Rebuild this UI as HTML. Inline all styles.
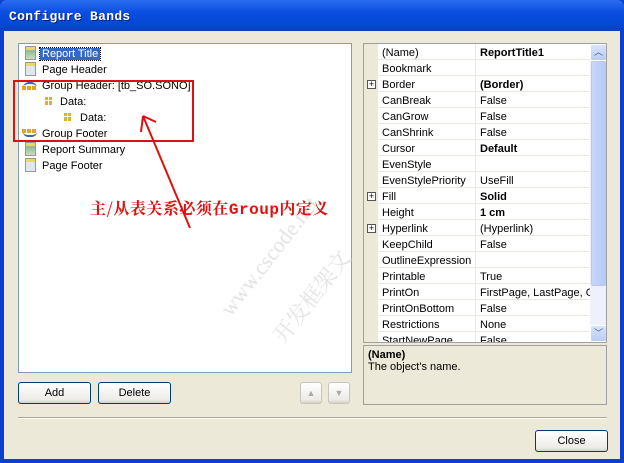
<!DOCTYPE html>
<html><head><meta charset="utf-8"><style>
*{margin:0;padding:0;box-sizing:border-box}
body{width:624px;height:463px;overflow:hidden;background:#0a3fd0;font-family:Tahoma,"Liberation Sans",sans-serif;font-size:11px;color:#000;position:relative}
.title{position:absolute;left:0;top:0;width:624px;height:31px;background:linear-gradient(#2a6cf0,#0a4ee0 40%,#0548d6 80%,#0a3fc0);border-radius:7px 7px 0 0}
.title span{position:absolute;left:9px;top:9px;font:bold 13px "Liberation Mono",monospace;color:#fff;text-shadow:1px 1px 0 #0a1f80;letter-spacing:0.3px}
.body{position:absolute;left:4px;top:31px;width:616px;height:428px;background:#ece9d8}
.abs{position:absolute}
.list{left:18px;top:43px;width:334px;height:330px;background:#fff;border:1px solid #7f9db9}
.item{position:absolute;left:22px;height:16px;line-height:16px;font-size:11px}
.ic{position:absolute;width:11px;height:14px;border:1px solid #999;background:linear-gradient(#e8d870 0 3px,#dfe6ee 3px)}
.ic.g{background:linear-gradient(#e8d870 0 3px,#8fb890 3px,#c8dcc0)}
.btn{position:absolute;height:22px;border:1px solid #003c74;border-radius:3px;background:linear-gradient(#fff,#ecebe6 85%,#d6d0c5);text-align:center;line-height:20px;font-size:11px}
.grid{left:363px;top:43px;width:244px;height:300px;border:1px solid #a0a0a0;background:#fff;overflow:hidden}
.row{position:absolute;left:0;width:226px;height:16px;line-height:16px;border-bottom:1px solid #ece9d8}
.row .m{position:absolute;left:0;top:0;width:14px;height:16px;background:#ece9d8}
.row .n{position:absolute;left:18px;top:1px}
.row .v{position:absolute;left:111px;top:0;padding-left:4px;padding-top:1px;border-left:1px solid #ece9d8;height:16px;width:120px;white-space:nowrap;overflow:hidden}
.b{font-weight:bold}
.plus{position:absolute;left:3px;top:4px;width:9px;height:9px;border:1px solid #555;background:#fff;font-size:9px;line-height:7px;text-align:center}
.sb{position:absolute;left:226px;top:0;width:17px;height:298px;background:#eef0fb}
.thumb{position:absolute;left:1px;top:17px;width:15px;height:225px;border:1px solid #b8c8f0;border-radius:2px;background:linear-gradient(90deg,#c8d6fb,#b6c9f8)}
.arr{position:absolute;left:0;width:17px;height:17px;background:linear-gradient(#d8e4fd,#b8ccf7);border:1px solid #fff;border-radius:2px;color:#4d6185;font-size:9px;text-align:center;line-height:15px}
.desc{left:363px;top:345px;width:244px;height:60px;border:1px solid #a0a0a0;background:#ece9d8;padding:3px 4px}
</style></head><body>
<div class="title"><span>Configure Bands</span></div>
<div class="body"></div>
<div class="abs list"></div>
<div class="ic g" style="left:25px;top:46px"></div><div class="item" style="left:40px;top:46px"><span style="background:#316ac5;color:#fff;outline:1px dotted #000;padding:0 2px">Report Title</span></div>
<div class="ic" style="left:25px;top:62px"></div><div class="item" style="left:42px;top:62px">Page Header</div>
<div class="abs" style="left:23px;top:82px;width:14px;height:8px;border-top:2px solid #4060b0;border-radius:6px 6px 0 0;"></div><div class="abs" style="left:22px;top:86px;width:15px;height:4px;background:repeating-linear-gradient(90deg,#e0a820 0 4px,#fff 4px 5px)"></div>
<div class="item" style="left:42px;top:78px">Group Header: [tb_SO.SONO]</div>
<div class="abs" style="left:45px;top:97px;width:8px;height:8px;background:repeating-linear-gradient(90deg,#e0b030 0 3px,transparent 3px 4px)"></div><div class="abs" style="left:45px;top:100px;width:8px;height:1px;background:#fff"></div>
<div class="item" style="left:60px;top:94px">Data:</div>
<div class="abs" style="left:64px;top:113px;width:8px;height:8px;background:repeating-linear-gradient(90deg,#e0b030 0 3px,transparent 3px 4px)"></div><div class="abs" style="left:64px;top:116px;width:8px;height:1px;background:#fff"></div>
<div class="item" style="left:80px;top:110px">Data:</div>
<div class="abs" style="left:22px;top:129px;width:15px;height:4px;background:repeating-linear-gradient(90deg,#e0a820 0 4px,#fff 4px 5px)"></div><div class="abs" style="left:23px;top:132px;width:14px;height:5px;border-bottom:2px solid #4060b0;border-radius:0 0 6px 6px"></div>
<div class="item" style="left:42px;top:126px">Group Footer</div>
<div class="ic g" style="left:25px;top:142px"></div><div class="item" style="left:42px;top:142px">Report Summary</div>
<div class="ic" style="left:25px;top:158px"></div><div class="item" style="left:42px;top:158px">Page Footer</div>
<div class="abs" style="left:215px;top:305px;transform:rotate(-52deg);color:#e4e4e4;font:22px 'Liberation Serif',serif;white-space:nowrap;transform-origin:left top">www.cscode.net</div>
<div class="abs" style="left:265px;top:330px;transform:rotate(-52deg);color:#e4e4e4;font:22px 'Noto Serif CJK SC',serif;white-space:nowrap;transform-origin:left top">开发框架文</div>
<div class="abs" style="left:13px;top:80px;width:181px;height:62px;border:2px solid #e01010"></div>
<svg class="abs" style="left:0;top:0" width="360" height="250"><path d="M190 228 L143 116 M143 116 L141 132 M143 116 L156 122" stroke="#e01010" stroke-width="2" fill="none"/></svg>
<div class="abs" style="left:90px;top:196px;color:#e01010;font:bold 16px 'Noto Serif CJK SC','Liberation Mono',serif;white-space:nowrap;letter-spacing:0.5px">主/从表关系必须在<span style="font-family:'Liberation Mono',monospace">Group</span>内定义</div>
<div class="btn" style="left:18px;top:382px;width:73px">Add</div>
<div class="btn" style="left:98px;top:382px;width:73px">Delete</div>
<div class="btn" style="left:300px;top:382px;width:22px;border-color:#c8c6bc;color:#aaa;font-size:9px">▲</div>
<div class="btn" style="left:328px;top:382px;width:22px;border-color:#c8c6bc;color:#aaa;font-size:9px">▼</div>
<div class="abs" style="left:18px;top:417px;width:589px;height:2px;border-top:1px solid #aca899;border-bottom:1px solid #fff"></div>
<div class="btn" style="left:535px;top:430px;width:73px">Close</div>
<div class="abs grid">
<div class="row" style="top:0"><div class="m"></div><span class="n">(Name)</span><span class="v b">ReportTitle1</span></div>
<div class="row" style="top:16px"><div class="m"></div><span class="n">Bookmark</span><span class="v"></span></div>
<div class="row" style="top:32px"><div class="m"><div class="plus">+</div></div><span class="n">Border</span><span class="v b">(Border)</span></div>
<div class="row" style="top:48px"><div class="m"></div><span class="n">CanBreak</span><span class="v">False</span></div>
<div class="row" style="top:64px"><div class="m"></div><span class="n">CanGrow</span><span class="v">False</span></div>
<div class="row" style="top:80px"><div class="m"></div><span class="n">CanShrink</span><span class="v">False</span></div>
<div class="row" style="top:96px"><div class="m"></div><span class="n">Cursor</span><span class="v b">Default</span></div>
<div class="row" style="top:112px"><div class="m"></div><span class="n">EvenStyle</span><span class="v"></span></div>
<div class="row" style="top:128px"><div class="m"></div><span class="n">EvenStylePriority</span><span class="v">UseFill</span></div>
<div class="row" style="top:144px"><div class="m"><div class="plus">+</div></div><span class="n">Fill</span><span class="v b">Solid</span></div>
<div class="row" style="top:160px"><div class="m"></div><span class="n">Height</span><span class="v b">1 cm</span></div>
<div class="row" style="top:176px"><div class="m"><div class="plus">+</div></div><span class="n">Hyperlink</span><span class="v">(Hyperlink)</span></div>
<div class="row" style="top:192px"><div class="m"></div><span class="n">KeepChild</span><span class="v">False</span></div>
<div class="row" style="top:208px"><div class="m"></div><span class="n">OutlineExpression</span><span class="v"></span></div>
<div class="row" style="top:224px"><div class="m"></div><span class="n">Printable</span><span class="v">True</span></div>
<div class="row" style="top:240px"><div class="m"></div><span class="n">PrintOn</span><span class="v">FirstPage, LastPage, O</span></div>
<div class="row" style="top:256px"><div class="m"></div><span class="n">PrintOnBottom</span><span class="v">False</span></div>
<div class="row" style="top:272px"><div class="m"></div><span class="n">Restrictions</span><span class="v">None</span></div>
<div class="row" style="top:288px"><div class="m"></div><span class="n">StartNewPage</span><span class="v">False</span></div>
<div class="sb"><div class="arr" style="top:0">︿</div><div class="thumb"></div><div class="arr" style="top:281px">﹀</div></div>
</div>
<div class="abs desc"><div class="b">(Name)</div><div>The object's name.</div></div>
</body></html>
